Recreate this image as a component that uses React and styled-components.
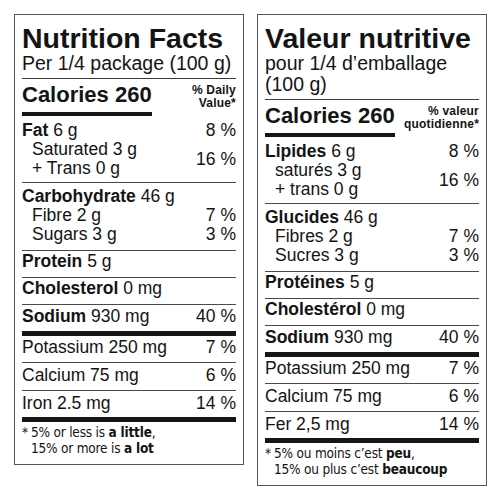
import React from "react";
import styled, { createGlobalStyle } from "styled-components";

const english = {
  title: "Nutrition Facts",
  serving: "Per 1/4 package (100 g)",
  calories: "Calories 260",
  dv: ["% Daily", "Value*"],
  fat: ["Fat", "6 g", "8 %"],
  fatSubs: ["Saturated 3 g", "+ Trans 0 g"],
  fatSubsPct: "16 %",
  carb: ["Carbohydrate", "46 g"],
  carbSubs: [["Fibre 2 g", "7 %"], ["Sugars 3 g", "3 %"]],
  main: [["Protein", "5 g", ""], ["Cholesterol", "0 mg", ""], ["Sodium", "930 mg", "40 %"]],
  minerals: [["Potassium 250 mg", "7 %"], ["Calcium 75 mg", "6 %"], ["Iron 2.5 mg", "14 %"]],
  foot: [["5% or less is ", "a little", ","], ["15% or more is ", "a lot", ""]],
};

const french = {
  title: "Valeur nutritive",
  serving: "pour 1/4 d’emballage (100 g)",
  calories: "Calories 260",
  dv: ["% valeur", "quotidienne*"],
  fat: ["Lipides", "6 g", "8 %"],
  fatSubs: ["saturés 3 g", "+ trans 0 g"],
  fatSubsPct: "16 %",
  carb: ["Glucides", "46 g"],
  carbSubs: [["Fibres 2 g", "7 %"], ["Sucres 3 g", "3 %"]],
  main: [["Protéines", "5 g", ""], ["Cholestérol", "0 mg", ""], ["Sodium", "930 mg", "40 %"]],
  minerals: [["Potassium 250 mg", "7 %"], ["Calcium 75 mg", "6 %"], ["Fer 2,5 mg", "14 %"]],
  foot: [["5% ou moins c’est ", "peu", ","], ["15% ou plus c’est ", "beaucoup", ""]],
};

// padding top / bottom of the single rows, taken from the label
const mainPads = [[0, 6], [0, 6], [1, 5]];
const mineralPads = [[1, 5], [2, 5], [2, 4]];

function NutritionTable({ data }) {
  return (
    <Panel>
      <Title>{data.title}</Title>
      <Serving>{data.serving}</Serving>

      <CalRow>
        <Calories>{data.calories}</Calories>
        <DailyValue>
          {data.dv[0]}
          <br />
          {data.dv[1]}
        </DailyValue>
      </CalRow>

      <Section $pt={5} $pb={4}>
        <Line>
          <span><b>{data.fat[0]}</b> {data.fat[1]}</span>
          <span>{data.fat[2]}</span>
        </Line>
        <SubGroup>
          <div>
            {data.fatSubs.map((s) => (
              <Line key={s} $indent>{s}</Line>
            ))}
          </div>
          <GroupPct>{data.fatSubsPct}</GroupPct>
        </SubGroup>
      </Section>

      <Section $pt={4} $pb={6}>
        <Line>
          <span><b>{data.carb[0]}</b> {data.carb[1]}</span>
        </Line>
        {data.carbSubs.map(([label, pct]) => (
          <Line key={label} $indent>
            <span>{label}</span>
            <span>{pct}</span>
          </Line>
        ))}
      </Section>

      {data.main.map(([name, amount, pct], i) => (
        <Section key={name} $pt={mainPads[i][0]} $pb={mainPads[i][1]} $rule={i === 2 ? "thick" : "thin"}>
          <Line $lh={20}>
            <span><b>{name}</b> {amount}</span>
            <span>{pct}</span>
          </Line>
        </Section>
      ))}

      {data.minerals.map(([label, pct], i) => (
        <Section key={label} $pt={mineralPads[i][0]} $pb={mineralPads[i][1]} $rule={i === 2 ? "thick" : "thin"}>
          <Line $lh={20}>
            <span>{label}</span>
            <span>{pct}</span>
          </Line>
        </Section>
      ))}

      <Footnote>
        <Star>*</Star>
        <div>
          {data.foot.map(([text, strong, tail]) => (
            <div key={text}>
              {text}<b>{strong}</b>{tail}
            </div>
          ))}
        </div>
      </Footnote>
    </Panel>
  );
}

export default function App() {
  return (
    <>
      <GlobalStyle />
      <Page>
        <NutritionTable data={english} />
        <NutritionTable data={french} />
      </Page>
    </>
  );
}

const GlobalStyle = createGlobalStyle`
  body {
    margin: 0;
    background: #fff;
  }
`;

const Page = styled.div`
  display: flex;
  align-items: flex-start;
  gap: 13px;
  padding: 14px 0 0 14px;
  font-family: "Liberation Sans", Arial, Helvetica, sans-serif;
  color: #141414;
`;

const Panel = styled.section`
  width: 230px;
  box-sizing: border-box;
  border: 1px solid #555;
  padding: 8px 7px 8px 7px;
`;

const Title = styled.h1`
  margin: 0;
  font-size: 28.5px;
  line-height: 30px;
  font-weight: 700;
`;

const Serving = styled.div`
  font-size: 19.5px;
  line-height: 21px;
  padding-bottom: 4px;
  border-bottom: 1px solid #3a3a3a;
`;

const CalRow = styled.div`
  display: flex;
  justify-content: space-between;
  align-items: flex-start;
`;

const Calories = styled.div`
  font-size: 22px;
  line-height: 24px;
  font-weight: 700;
  padding: 4px 0 5px;
  border-bottom: 4px solid #161616;
`;

const DailyValue = styled.div`
  margin-top: 5px;
  font-size: 12px;
  line-height: 13px;
  font-weight: 700;
  letter-spacing: 0.2px;
  text-align: right;
`;

const Section = styled.div`
  padding: ${(p) => p.$pt}px 0 ${(p) => p.$pb}px;
  border-bottom: ${(p) => (p.$rule === "thick" ? "5px solid #161616" : "1px solid #4a4a4a")};
`;

const Line = styled.div`
  display: flex;
  justify-content: space-between;
  font-size: 17.5px;
  line-height: ${(p) => p.$lh || 19}px;
  padding-left: ${(p) => (p.$indent ? 10 : 0)}px;
  white-space: nowrap;
`;

const SubGroup = styled.div`
  display: flex;
  justify-content: space-between;
  align-items: center;
`;

const GroupPct = styled.span`
  font-size: 17.5px;
  line-height: 19px;
`;

const Footnote = styled.div`
  display: flex;
  padding-top: 3px;
  font-family: "Liberation Sans Narrow", "DejaVu Sans Condensed", sans-serif;
  font-size: 13.5px;
  line-height: 15.5px;
  letter-spacing: -0.2px;
  white-space: nowrap;
`;

const Star = styled.span`
  width: 9px;
`;
